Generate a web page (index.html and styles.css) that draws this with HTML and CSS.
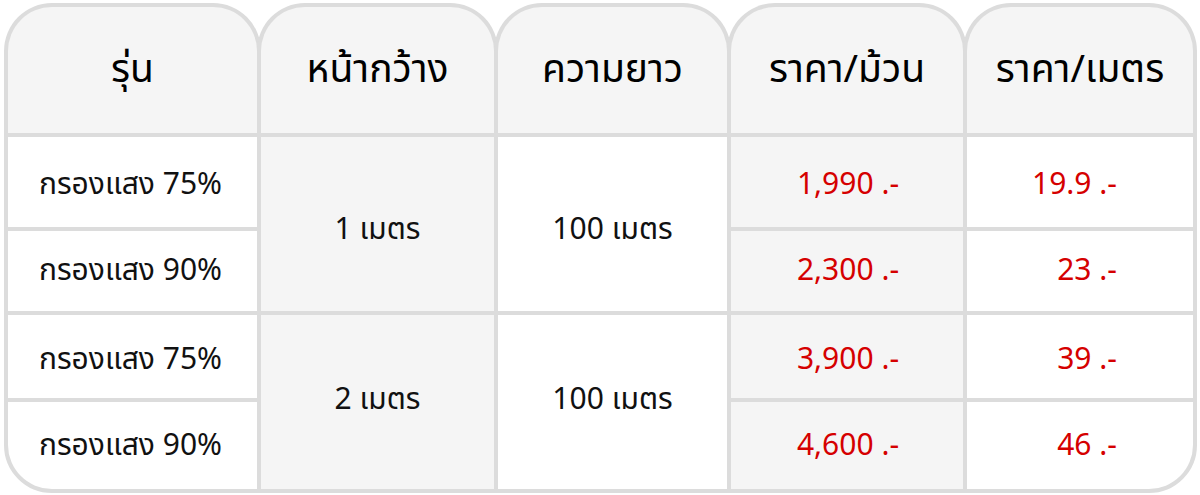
FILE: index.html
```html
<!DOCTYPE html>
<html lang="th">
<head>
<meta charset="utf-8">
<title>ตารางราคา</title>
<link rel="stylesheet" href="styles.css">
</head>
<body>
<div class="price-table">
  <div class="head">
    <div class="th c1">รุ่น</div>
    <div class="th c2">หน้ากว้าง</div>
    <div class="th c3">ความยาว</div>
    <div class="th c4">ราคา/ม้วน</div>
    <div class="th c5">ราคา/เมตร</div>
  </div>
  <div class="body">
    <div class="td model r1">กรองแสง 75%</div>
    <div class="td width span-a">1 เมตร</div>
    <div class="td length span-a">100 เมตร</div>
    <div class="td roll r1">1,990 .-</div>
    <div class="td meter r1">19.9 .-</div>

    <div class="td model r2">กรองแสง 90%</div>
    <div class="td roll r2">2,300 .-</div>
    <div class="td meter r2">23 .-</div>

    <div class="td model r3">กรองแสง 75%</div>
    <div class="td width span-b">2 เมตร</div>
    <div class="td length span-b">100 เมตร</div>
    <div class="td roll r3">3,900 .-</div>
    <div class="td meter r3">39 .-</div>

    <div class="td model r4">กรองแสง 90%</div>
    <div class="td roll r4">4,600 .-</div>
    <div class="td meter r4">46 .-</div>
  </div>
</div>
</body>
</html>
```
FILE: styles.css
```css
html, body {
  margin: 0;
  padding: 0;
  background: #ffffff;
}
body {
  font-family: "Leelawadee UI", Tahoma, "Noto Sans Thai", "Noto Sans", "DejaVu Sans", sans-serif;
  color: #000;
}
.price-table {
  width: 1193px;
  margin: 3px 0 0 4px;
}
.head {
  display: flex;
  height: 130px;
}
.th {
  box-sizing: border-box;
  height: 130px;
  background: #f5f5f5;
  border: 4px solid #dcdcdc;
  border-bottom: 0;
  border-radius: 48px 48px 0 0;
  display: flex;
  align-items: center;
  justify-content: center;
  padding-bottom: 0;
  font-size: 39px;
  color: #000;
}
.th + .th { margin-left: -4px; }
.c1 { width: 257px; }
.c2 { width: 241px; }
.c3 { width: 237px; }
.c4 { width: 240px; }
.c5 { width: 234px; }

.body {
  display: grid;
  grid-template-columns: 249px 233px 229px 232px 226px;
  grid-template-rows: 90px 80px 83px 87px;
  gap: 4px;
  background: #dcdcdc;
  border: 4px solid #dcdcdc;
  border-radius: 0 0 48px 48px;
  overflow: hidden;
}
.td {
  display: flex;
  align-items: center;
  justify-content: center;
  font-size: 30px;
  color: #111;
  background: #fff;
}
.model { grid-column: 1; padding-right: 4px; }
.width { grid-column: 2; background: #f5f5f5; }
.length { grid-column: 3; }
.roll { grid-column: 4; background: #f5f5f5; color: #d50000; padding-left: 2px; }
.meter { grid-column: 5; color: #d50000; justify-content: flex-end; padding-right: 76px; }
.r1 { grid-row: 1; }
.r2 { grid-row: 2; }
.r3 { grid-row: 3; }
.r4 { grid-row: 4; }
.span-a { grid-row: 1 / span 2; }
.span-b { grid-row: 3 / span 2; }
.r1, .r3 { padding-top: 6px; }
.span-a { padding-top: 12px; }
.span-b { padding-bottom: 4px; }
```
